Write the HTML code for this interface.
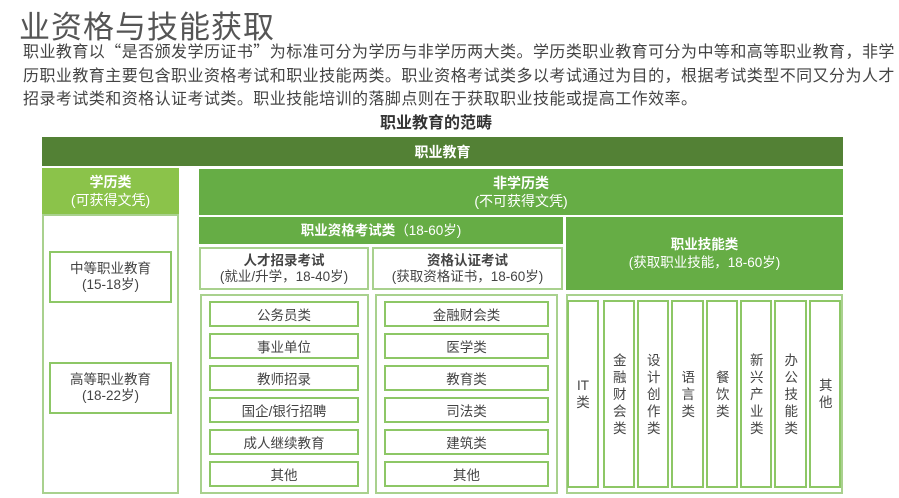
<!DOCTYPE html>
<html><head><meta charset="utf-8"><style>
*{margin:0;padding:0;box-sizing:border-box}
body{width:899px;height:498px;background:#fff;position:relative;overflow:hidden;font-family:"Liberation Sans","Noto Sans CJK SC",sans-serif;color:#444}
.a{position:absolute}
.c{display:flex;flex-direction:column;align-items:center;justify-content:center;text-align:center}
.t{font-size:31px;color:#555;left:19px;top:2px;letter-spacing:1px}
.p{left:23px;top:39px;font-size:16px;line-height:23.5px;width:880px;color:#444;white-space:nowrap;letter-spacing:0.45px;font-family:"Noto Sans CJK SC",sans-serif}
.g1{background:#538135;color:#fff;font-weight:bold;font-size:14px}
.g2{background:#8bc34a;color:#fff;font-size:14px;line-height:18px}
.g3{background:#66ad45;color:#fff;font-size:14px;line-height:18px}
.wb{border:2px solid #a9d18e;background:#fff}
.ib{border:2px solid #8dc766;background:#fff;font-size:13.5px;color:#444}
.b{font-weight:bold}
.v{font-size:13.5px;line-height:17px;width:12px;word-break:break-all}
</style></head><body>
<div class="a t">业资格与技能获取</div>
<div class="a p">职业教育以“是否颁发学历证书”为标准可分为学历与非学历两大类。学历类职业教育可分为中等和高等职业教育，非学<br>历职业教育主要包含职业资格考试和职业技能两类。职业资格考试类多以考试通过为目的，根据考试类型不同又分为人才<br>招录考试类和资格认证考试类。职业技能培训的落脚点则在于获取职业技能或提高工作效率。</div>
<div class="a b" style="left:380px;top:109px;font-size:16px;color:#333">职业教育的范畴</div>
<div class="a c g1" style="left:42px;top:137px;width:801px;height:29px">职业教育</div>
<div class="a c g2" style="left:42px;top:168px;width:137px;height:46px"><span class="b">学历类</span><span>(可获得文凭)</span></div>
<div class="a wb" style="left:42px;top:214px;width:137px;height:280px"></div>
<div class="a c ib" style="left:49px;top:251px;width:123px;height:52px;line-height:16px">中等职业教育<br>(15-18岁)</div>
<div class="a c ib" style="left:49px;top:362px;width:123px;height:52px;line-height:16px">高等职业教育<br>(18-22岁)</div>
<div class="a c g3" style="left:199px;top:169px;width:644px;height:46px"><span class="b">非学历类</span><span>(不可获得文凭)</span></div>
<div class="a c g3" style="left:199px;top:217px;width:364px;height:27px;font-size:13.5px"><span><b>职业资格考试类</b>（18-60岁)</span></div>
<div class="a c g3" style="left:566px;top:217px;width:277px;height:73px;font-size:13.5px"><b>职业技能类</b><span>(获取职业技能，18-60岁)</span></div>
<div class="a c ib" style="left:199px;top:247px;width:170px;height:43px;line-height:16px;border-color:#a9d18e"><b>人才招录考试</b><span>(就业/升学，18-40岁)</span></div>
<div class="a c ib" style="left:372px;top:247px;width:191px;height:43px;line-height:16px;border-color:#a9d18e"><b>资格认证考试</b><span>(获取资格证书，18-60岁)</span></div>
<div class="a wb" style="left:200px;top:294px;width:169px;height:200px"></div>
<div class="a wb" style="left:375px;top:294px;width:183px;height:200px"></div>
<div class="a wb" style="left:566px;top:294px;width:277px;height:200px"></div>
<div class="a c ib" style="left:209px;top:301px;width:150px;height:26px">公务员类</div>
<div class="a c ib" style="left:209px;top:333px;width:150px;height:26px">事业单位</div>
<div class="a c ib" style="left:209px;top:365px;width:150px;height:26px">教师招录</div>
<div class="a c ib" style="left:209px;top:397px;width:150px;height:26px">国企/银行招聘</div>
<div class="a c ib" style="left:209px;top:429px;width:150px;height:26px">成人继续教育</div>
<div class="a c ib" style="left:209px;top:461px;width:150px;height:26px">其他</div>
<div class="a c ib" style="left:384px;top:301px;width:165px;height:26px">金融财会类</div>
<div class="a c ib" style="left:384px;top:333px;width:165px;height:26px">医学类</div>
<div class="a c ib" style="left:384px;top:365px;width:165px;height:26px">教育类</div>
<div class="a c ib" style="left:384px;top:397px;width:165px;height:26px">司法类</div>
<div class="a c ib" style="left:384px;top:429px;width:165px;height:26px">建筑类</div>
<div class="a c ib" style="left:384px;top:461px;width:165px;height:26px">其他</div>
<div class="a c ib" style="left:567px;top:300px;width:32px;height:188px"><span class="v" style="width:14px">IT 类</span></div>
<div class="a c ib" style="left:603px;top:300px;width:32px;height:188px"><span class="v">金融财会类</span></div>
<div class="a c ib" style="left:637px;top:300px;width:32px;height:188px"><span class="v">设计创作类</span></div>
<div class="a c ib" style="left:671px;top:300px;width:33px;height:188px"><span class="v">语言类</span></div>
<div class="a c ib" style="left:706px;top:300px;width:32px;height:188px"><span class="v">餐饮类</span></div>
<div class="a c ib" style="left:740px;top:300px;width:32px;height:188px"><span class="v">新兴产业类</span></div>
<div class="a c ib" style="left:774px;top:300px;width:33px;height:188px"><span class="v">办公技能类</span></div>
<div class="a c ib" style="left:809px;top:300px;width:32px;height:188px"><span class="v">其他</span></div>
</body></html>
